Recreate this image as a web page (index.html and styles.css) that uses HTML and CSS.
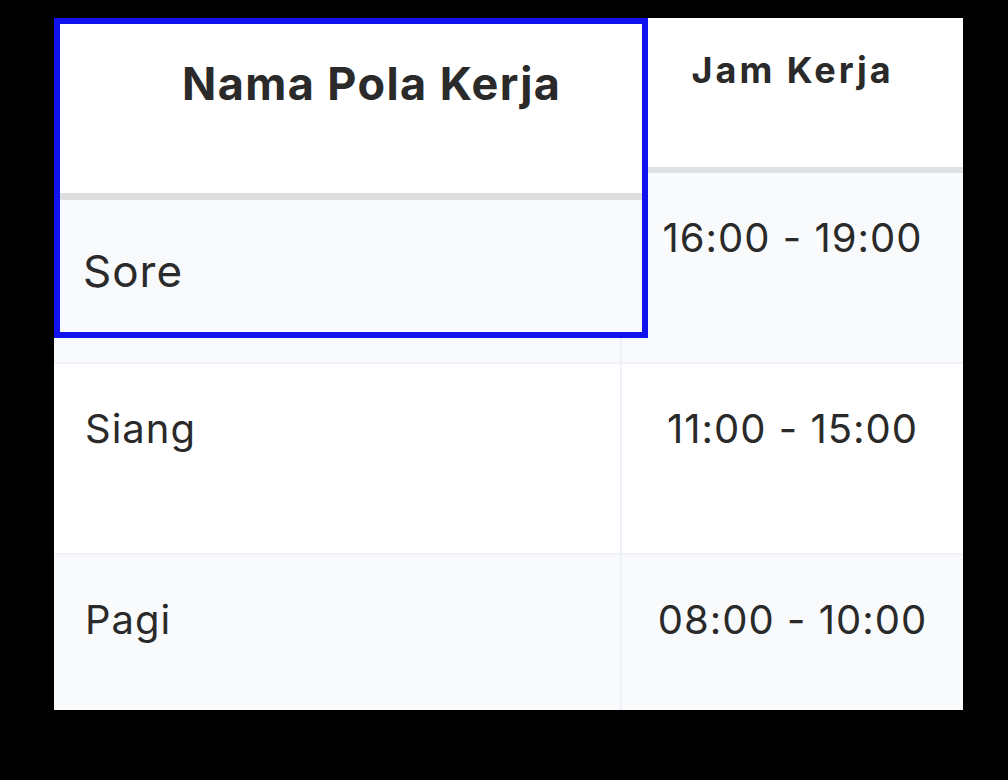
FILE: index.html
```html
<!DOCTYPE html>
<html lang="id">
<head>
<meta charset="utf-8">
<title>Pola Kerja</title>
<link rel="stylesheet" href="styles.css">
</head>
<body>
<div class="stage">
  <div class="table-wrap">
    <table class="grid">
      <thead>
        <tr>
          <th class="col-name"><span class="covered">Nama Pola Kerja</span></th>
          <th class="col-time">Jam Kerja</th>
        </tr>
      </thead>
      <tbody>
        <tr class="alt">
          <td class="col-name"><span class="covered">Sore</span></td>
          <td class="col-time">16:00 - 19:00</td>
        </tr>
        <tr>
          <td class="col-name">Siang</td>
          <td class="col-time">11:00 - 15:00</td>
        </tr>
        <tr class="alt">
          <td class="col-name">Pagi</td>
          <td class="col-time">08:00 - 10:00</td>
        </tr>
      </tbody>
    </table>
    <div class="focus">
      <div class="focus-head">Nama Pola Kerja</div>
      <div class="focus-cell">Sore</div>
    </div>
  </div>
</div>
</body>
</html>
```

FILE: styles.css
```css
html, body {
  margin: 0;
  padding: 0;
  background: #000;
}

body {
  width: 1008px;
  height: 780px;
  overflow: hidden;
  font-family: Inter, "Noto Sans", "Liberation Sans", sans-serif;
  color: #2a2a2a;
}

.stage {
  padding: 18px 0 0 54px;
}

.table-wrap {
  position: relative;
  width: 909px;
  height: 692px;
  overflow: hidden;
  background: #fff;
}

.grid {
  border-collapse: separate;
  border-spacing: 0;
  width: 909px;
  table-layout: fixed;
}

.grid th,
.grid td {
  padding: 0;
  vertical-align: top;
  box-sizing: border-box;
}

.grid .col-name {
  width: 568px;
}

.covered {
  visibility: hidden;
}

.grid th {
  height: 155px;
  padding-top: 30px;
  font-size: 36px;
  line-height: 44px;
  font-weight: 700;
  letter-spacing: 3px;
  text-align: center;
  border-bottom: 6px solid #dfe1e3;
}

.grid td {
  height: 191px;
  padding-top: 41px;
  font-size: 40px;
  line-height: 48px;
  font-weight: 400;
  letter-spacing: 1px;
  border-bottom: 2px solid #f0f2f7;
}

.grid td.col-name {
  padding-left: 31px;
  border-right: 2px solid #eef0f9;
}

.grid td.col-time {
  text-align: center;
}

.grid tr.alt td {
  background: #f9fafc;
}

.focus {
  position: absolute;
  left: 0;
  top: 0;
  width: 594px;
  box-sizing: border-box;
  border: 6px solid #1212ee;
  background: #fff;
}

.focus-head {
  height: 176px;
  box-sizing: border-box;
  padding: 33px 0 0 122px;
  font-size: 45px;
  line-height: 54px;
  font-weight: 700;
  letter-spacing: 1.4px;
  border-bottom: 7px solid #dcdee0;
}

.focus-cell {
  height: 132px;
  box-sizing: border-box;
  padding: 45px 0 0 23px;
  font-size: 44px;
  line-height: 52px;
  letter-spacing: 1px;
  background: #f8f9fb;
}
```
